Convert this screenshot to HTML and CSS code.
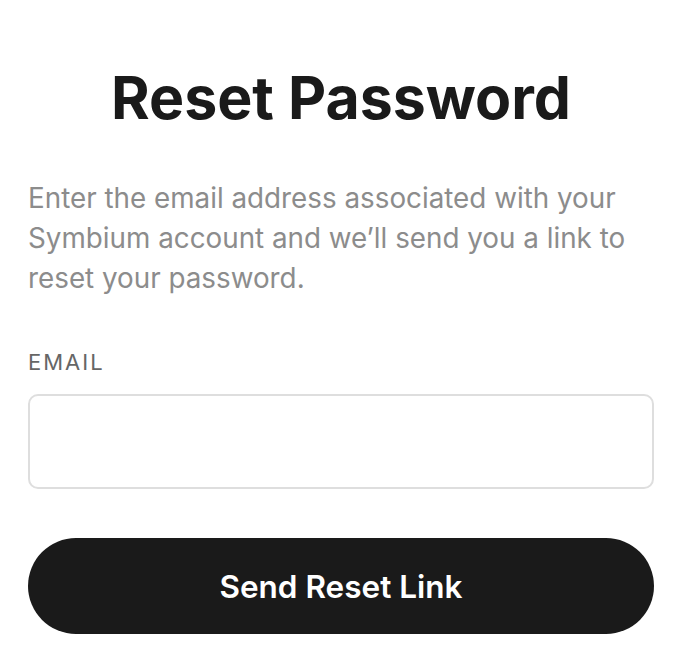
FILE: index.html
```html
<!DOCTYPE html>
<html lang="en">
<head>
<meta charset="utf-8">
<title>Reset Password</title>
<link rel="stylesheet" href="styles.css">
</head>
<body>
<main class="page">
  <h1 class="title">Reset Password</h1>
  <p class="desc">Enter the email address associated with your Symbium account and we’ll send you a link to reset your password.</p>
  <form class="form">
    <label class="label" for="email">EMAIL</label>
    <input class="input" id="email" type="email">
    <button class="button" type="button">Send Reset Link</button>
  </form>
</main>
</body>
</html>
```
FILE: styles.css
```css
* { box-sizing: border-box; }
html, body { margin: 0; padding: 0; background: #fff; }
body { font-family: Inter, "Noto Sans", sans-serif; color: #1a1a1a; }
.page {
  width: 626px;
  margin-left: 28px;
  padding-top: 64px;
}
.title {
  margin: 0;
  font-size: 59px;
  font-weight: 700;
  line-height: 68px;
  text-align: center;
  color: #1a1a1a;
}
.desc {
  margin: 46px 0 0;
  font-size: 27.8px;
  line-height: 40px;
  color: #8c8c8c;
}
.form { display: flex; flex-direction: column; }
.label {
  margin-top: 49px;
  font-size: 22px;
  line-height: 30px;
  letter-spacing: 2px;
  color: #666;
}
.input {
  margin-top: 17px;
  height: 95px;
  border: 2px solid #dedede;
  border-radius: 10px;
  background: #fff;
  font: inherit;
}
.button {
  margin-top: 49px;
  height: 96px;
  border: 0;
  border-radius: 48px;
  background: #1a1a1a;
  color: #fff;
  font-family: Inter, sans-serif;
  font-size: 31.5px;
  font-weight: 600;
}
```
